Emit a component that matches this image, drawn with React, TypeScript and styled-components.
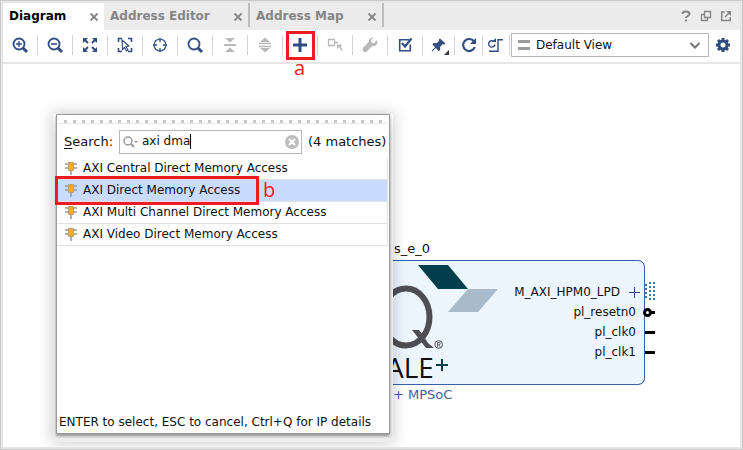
import React from "react";
import styled, { createGlobalStyle, css } from "styled-components";

const NAVY = "#2f4d82";
const GREY = "#b9b9b9";
const RED = "#ed1c24";

const GlobalStyle = createGlobalStyle`
  *, *::before, *::after { box-sizing: border-box; }
  body { margin: 0; background: #fff; font: 13px/16px "DejaVu Sans", sans-serif; color: #111; }
  button, input, select { font: inherit; color: inherit; margin: 0; padding: 0; border: 0; background: none; }
  svg { display: block; flex: none; }
`;

const Frame = styled.main`
  display: flex;
  flex-direction: column;
  min-height: 100vh;
  border: 1px solid #cbcbcb;
  box-shadow: inset 0 0 0 2px #e6e6e6;
  padding: 2px;
`;

const TabBar = styled.header`
  display: flex;
  height: 27px;
  background: #ececec;
`;

const Tab = styled.div<{ $active?: boolean; $width: number }>`
  display: flex;
  align-items: center;
  justify-content: space-between;
  width: ${(p) => p.$width}px;
  padding: 0 5px 2px 6px;
  color: ${(p) => (p.$active ? "#000" : "#858585")};
  background: ${(p) => (p.$active ? "#fff" : "transparent")};
  ${(p) =>
    !p.$active &&
    css`
      border-right: 2px solid transparent;
      border-image: linear-gradient(#bdbdbd 85%, transparent 85%) 1;
    `}
`;

const TabTitle = styled.button`
  font-weight: bold;
  font-size: 12px;
  white-space: nowrap;
`;

const IconButton = styled.button`
  display: flex;
  align-items: center;
  justify-content: center;
`;

const CloseButton = styled(IconButton)`
  padding-top: 3px;
`;

const WindowActions = styled.div`
  display: flex;
  gap: 8px;
  margin-left: auto;
  padding: 0 8px 2px 0;
`;

const ToolBar = styled.div`
  display: flex;
  align-items: center;
  height: 34px;
  padding-bottom: 2px;
  border-bottom: 2px solid #e6e6e6;
`;

const Tool = styled.div<{ $width?: number }>`
  display: flex;
  justify-content: center;
  flex: none;
  position: relative;
  width: ${(p) => p.$width ?? 35}px;
  height: 20px;
  border-right: 1px solid #d4d4d4;
`;

const Highlight = styled.span`
  position: absolute;
  top: -4px;
  left: 3px;
  width: 29px;
  height: 29px;
  border: 3px solid ${RED};
  pointer-events: none;
`;

const Marker = styled.span`
  position: absolute;
  font: 20px/24px "Open Sans", sans-serif;
  color: ${RED};
  z-index: 3;
`;

const ToolMarker = styled(Marker)`
  top: 21px;
  left: 11px;
`;

const ViewPicker = styled.label`
  display: flex;
  align-items: center;
  position: relative;
  flex: 1;
  height: 24px;
  margin-left: 1px;
  border: 1px solid #b8b8b8;
`;

const ViewSelect = styled.select`
  appearance: none;
  flex: 1;
  min-width: 0;
  height: 22px;
  padding-left: 24px;
  font-size: 12px;
  color: #111;
  outline: none;
`;

const ViewIcon = styled.span<{ $end?: boolean }>`
  position: absolute;
  ${(p) => (p.$end ? "right: 7px;" : "left: 6px;")}
  pointer-events: none;
`;

const SettingsButton = styled(IconButton)`
  flex: none;
  width: 31px;
  padding-right: 3px;
`;

const Canvas = styled.section`
  position: relative;
  flex: 1;
  min-height: 383px;
  overflow: hidden;
`;

const Node = styled.article`
  position: absolute;
  left: 390px;
  top: 176px;
  width: 252px;
`;

const NodeHeading = styled.div`
  height: 20px;
  line-height: 18px;
  padding-left: 1px;
`;

const NodeBody = styled.div`
  display: flex;
  justify-content: space-between;
  height: 125px;
  background: #edf5ff;
  border: 1px solid #3c60a8;
  border-left: 0;
  border-radius: 0 7px 7px 0;
`;

const LogoBox = styled.div`
  margin-left: -3px;
`;

const NodeKind = styled.div`
  padding-top: 1px;
  line-height: 18px;
  color: #3c5c9f;
`;

const Ports = styled.ul`
  list-style: none;
  margin: 0;
  padding: 21px 8px 0 0;
  font-size: 12px;
  line-height: 20px;
  text-align: right;
`;

const BusPort = styled.li`
  display: flex;
  align-items: center;
  justify-content: flex-end;
  gap: 8px;
  margin-right: -4px;
`;

const Pins = styled.div`
  position: absolute;
  left: 639px;
  top: 215px;
`;

const PopupBackdrop = styled.div`
  position: absolute;
  left: 50px;
  top: 50px;
  width: 340px;
  height: 328px;
  padding: 0 3px 8px;
  background: linear-gradient(#fff, #eee 20px);
  box-shadow: 0 0 14px 1px rgba(0, 0, 0, 0.2);
`;

const Popup = styled.form`
  display: flex;
  flex-direction: column;
  height: 320px;
  padding: 0 1px 2px 1px;
  background: #fff;
  border: 1px solid #9b9b9b;
  box-shadow: 0 2px 3px rgba(0, 0, 0, 0.4);
`;

const Grip = styled.div`
  height: 9px;
  flex: none;
  border-bottom: 1px solid #e9e9e9;
  background: repeating-linear-gradient(90deg, #c6c6c6 0 3px, transparent 3px 9px) 6px 5px / 318px 3px no-repeat;
`;

const SearchRow = styled.div`
  display: flex;
  align-items: center;
  height: 34px;
  padding: 1px 2px 0 6px;
`;

const SearchLabel = styled.label`
  flex: none;
  width: 55px;
  &::first-letter { text-decoration: underline; text-underline-offset: 2px; }
`;

const SearchBox = styled.div`
  display: flex;
  align-items: center;
  position: relative;
  flex: none;
  width: 183px;
  height: 24px;
  border: 1px solid #b8b8b8;
  padding: 0 2px 0 3px;
`;

const SearchInput = styled.input`
  flex: 1;
  min-width: 0;
  height: 22px;
  padding: 0 0 1px 3px;
  font-size: 12px;
  outline: none;
`;

const Caret = styled.span`
  position: absolute;
  left: 70px;
  top: 3px;
  width: 1px;
  height: 15px;
  background: #000;
`;

const MatchCount = styled.output`
  margin-left: 6px;
  white-space: nowrap;
`;

const Results = styled.ul`
  list-style: none;
  margin: 0;
  padding: 0;
  flex: none;
  border-right: 1px solid #e4e4e4;
`;

const Result = styled.li<{ $selected?: boolean }>`
  position: relative;
  height: 22px;
  border-bottom: 1px solid #e0e0e0;
  background: ${(p) => (p.$selected ? "#c9dcff" : "#fff")};
`;

const ResultButton = styled.button`
  display: flex;
  align-items: center;
  gap: 5px;
  width: 100%;
  height: 21px;
  padding: 0 0 1px 6px;
  font-size: 12px;
  white-space: nowrap;
`;

const ResultHighlight = styled.span`
  position: absolute;
  left: -3px;
  top: -4px;
  width: 204px;
  height: 29px;
  border: 3px solid ${RED};
  z-index: 2;
  pointer-events: none;
`;

const ResultMarker = styled(Marker)`
  left: 205px;
  top: -2px;
`;

const Hint = styled.footer`
  margin-top: auto;
  padding-left: 1px;
  line-height: 18px;
  font-size: 12px;
  white-space: nowrap;
`;

const Icon = ({ size = 20, color = NAVY, children }: { size?: number; color?: string; children: React.ReactNode }) => (
  <svg width={size} height={size} viewBox={`0 0 ${size} ${size}`} fill="none" stroke={color} strokeWidth="2" aria-hidden="true">
    {children}
  </svg>
);

const lens = (
  <>
    <circle cx="9" cy="9" r="5.5" strokeWidth="1.800" />
    <path d="M13 13l4 4" strokeWidth="3" />
  </>
);

const tools: { name: string; width?: number; color?: string; art: React.ReactNode; marked?: boolean }[] = [
  { name: "Zoom in", art: <>{lens}<path d="M6 9h6M9 6v6" strokeWidth="1.4" /></> },
  { name: "Zoom out", art: <>{lens}<path d="M6 9h6" strokeWidth="1.6" /></> },
  {
    name: "Zoom fit",
    art: (
      <>
        <path d="M4 4l4 4M16 4l-4 4M4 16l4-4M16 16l-4-4" />
        <path d="M3 3h5L3 8zM17 3v5l-5-5zM3 17v-5l5 5zM17 17h-5l5-5z" fill={NAVY} stroke="none" />
      </>
    ),
  },
  {
    name: "Select area",
    art: (
      <>
        <path d="M3.5 7V3.5H7M13 3.5h3.500V7M16.500 13v3.500H13M7 16.500H3.500V13" strokeWidth="1.600" />
        <path d="M7 5l7 6-3 .5 2 3.500-1.500 1-2-3.500L7.500 14.500z" strokeWidth="1.100" />
      </>
    ),
  },
  {
    name: "Auto fit selection",
    art: (
      <>
        <circle cx="10" cy="10" r="6" strokeWidth="1.200" />
        <path d="M10 3v4M10 13v4M3 10h4M13 10h4" strokeWidth="1.400" />
      </>
    ),
  },
  { name: "Search", art: lens },
  {
    name: "Collapse all",
    color: GREY,
    art: <><path d="M4 10h12" /><path d="M5 3h10l-5 4.500zM5 17h10l-5-4.500z" fill={GREY} stroke="none" /></>,
  },
  {
    name: "Expand all",
    color: GREY,
    art: <><path d="M4 8.500h12M4 11.500h12" strokeWidth="1.600" /><path d="M5 7h10l-5-4.500zM5 13h10l-5 4.500z" fill={GREY} stroke="none" /></>,
  },
  { name: "Add IP", marked: true, art: <path d="M3 10h14M10 3v14" strokeWidth="3" /> },
  {
    name: "Make external",
    color: GREY,
    art: (
      <>
        <path d="M3.500 4.500h6v6h-6zM10 7.500h3" strokeWidth="1.300" />
        <path d="M12 9.500h5.500l-1.800 1.800 2 4-1.200.7-2.200-4-2.300 2z" fill={GREY} stroke="none" />
      </>
    ),
  },
  {
    name: "Customize block",
    color: GREY,
    art: (
      <path
        d="M16.500 5.500l-2.500 2.500-2.500-.5-.5-2.500L13.500 2.800C11 2.200 8.300 4 8.600 7.300L3.300 12.600a2.500 2.500 0 1 0 3.800 3.700l5.300-5.200c3 .6 5.500-2.300 4.800-5.200z"
        fill={GREY}
        stroke="none"
      />
    ),
  },
  {
    name: "Validate design",
    art: <><path d="M14 4.700H4.700v11h10.600V9.500" strokeWidth="1.600" /><path d="M7 8l3 3.500 6.500-8" strokeWidth="2.200" /></>,
  },
  {
    name: "Pin",
    width: 32,
    art: (
      <>
        <path d="M11 3.500l5.500 5-1.500 1-1.500-.2-2.500 2.700.3 3-1.500 1-3-3-3.500 3.500-.7-.7 3.500-3.500-2.600-2.800 1-1.500 3.200.3 2.500-2.600-.3-1.200z" fill={NAVY} stroke="none" />
        <path d="M20 15v5h-5z" fill="#333" stroke="none" />
      </>
    ),
  },
  { name: "Regenerate layout", width: 28, art: <><path d="M15 6.500a6 6 0 1 0 .8 5.500" strokeWidth="2.200" /><path d="M17 3v6h-6z" fill={NAVY} stroke="none" /></> },
  { name: "Optimize routing", width: 27, art: <><path d="M8 6.500a3.200 3.200 0 1 0 1 3M3 16.300h9V4.700h5" strokeWidth="1.400" /><path d="M10 3v4H6z" fill={NAVY} stroke="none" /></> },
];

const Close = ({ name }: { name: string }) => (
  <CloseButton type="button" aria-label={`Close ${name}`}>
    <Icon size={10} color="#858585"><path d="M1.500 1.500l7 7M8.500 1.500l-7 7" strokeWidth="1.800" /></Icon>
  </CloseButton>
);

const ChipIcon = () => (
  <svg width="14" height="14" viewBox="0 0 14 14" aria-hidden="true">
    <path d="M1 3h12M1 7h12M7 9v5" stroke="#999" strokeWidth="1.500" />
    <path d="M4.500 1.500h5v8h-5z" fill="#fbab26" stroke="#b5a078" />
  </svg>
);

const tabs = [
  { name: "Diagram", width: 101, active: true },
  { name: "Address Editor", width: 146 },
  { name: "Address Map", width: 134 },
];

const results = [
  "AXI Central Direct Memory Access",
  "AXI Direct Memory Access",
  "AXI Multi Channel Direct Memory Access",
  "AXI Video Direct Memory Access",
];

const DeviceLogo = () => (
  <svg width="110" height="123" viewBox="-3 0 110 123" aria-hidden="true">
    <path d="M25 4h30l20 24H45z" fill="#003e4d" />
    <path d="M75 28h30l-20 23H55z" fill="#a9bbca" />
    <ellipse cx="13" cy="56" rx="23.500" ry="28.500" fill="none" stroke="#4e4f55" strokeWidth="6" />
    <path d="M19 69h7c4 4 6 9 9 13l6 5h-8c-5-6-9-12-14-18z" fill="#4e4f55" />
    <circle cx="45.700" cy="83.500" r="3.800" fill="none" stroke="#4e4f55" />
    <path d="M44.500 86v-4.500h1.500a1 1 0 0 1 0 2.200h-1.500M46 84l1.300 2" fill="none" stroke="#4e4f55" strokeWidth=".8" />
    <text x="-7" y="117" fontFamily="Open Sans, sans-serif" fontSize="28" fill="#111">ALE</text>
    <path d="M43 104h12M49 98v12" stroke="#003e4d" strokeWidth="2" />
  </svg>
);

export default function App() {
  return (
    <>
      <GlobalStyle />
      <Frame>
        <TabBar>
          {tabs.map((t) => (
            <Tab key={t.name} $width={t.width} $active={t.active}>
              <TabTitle type="button">{t.name}</TabTitle>
              <Close name={t.name} />
            </Tab>
          ))}
          <WindowActions>
            <IconButton type="button" aria-label="Help">
              <Icon size={12} color="#858585"><path d="M2.500 4c0-3.500 7-3.500 7 0 0 2-3.500 2-3.500 4M6 9.500v2" /></Icon>
            </IconButton>
            <IconButton type="button" aria-label="Float">
              <Icon size={12} color="#858585"><path d="M4.500 1.500h6v6h-6zM4.500 4.500h-3v6h6v-3" strokeWidth="1.300" /></Icon>
            </IconButton>
            <IconButton type="button" aria-label="Maximize">
              <Icon size={12} color="#858585"><path d="M5 2H1.700v8.500h8.600V7" strokeWidth="1.500" /><path d="M5 7l4-4" strokeWidth="1.500" /><path d="M6 1h5v5z" fill="#858585" stroke="none" /></Icon>
            </IconButton>
          </WindowActions>
        </TabBar>

        <ToolBar>
          {tools.map((t) => (
            <Tool key={t.name} $width={t.width}>
              <IconButton type="button" aria-label={t.name}>
                <Icon color={t.color}>{t.art}</Icon>
              </IconButton>
              {t.marked && (
                <>
                  <Highlight />
                  <ToolMarker>a</ToolMarker>
                </>
              )}
            </Tool>
          ))}
          <ViewPicker>
            <ViewIcon>
              <Icon size={12} color="#9b9b9b"><path d="M0 2.500h12M0 9.500h12" strokeWidth="3" /></Icon>
            </ViewIcon>
            <ViewSelect aria-label="View" defaultValue="Default View">
              <option>Default View</option>
            </ViewSelect>
            <ViewIcon $end>
              <Icon size={12} color="#777"><path d="M1.500 4L6 8.500 10.500 4" /></Icon>
            </ViewIcon>
          </ViewPicker>
          <SettingsButton type="button" aria-label="Settings">
            <Icon size={16}>
              <circle cx="8" cy="8" r="4" strokeWidth="3" />
              <path d="M8 1v2.500M8 12.500V15M1 8h2.500M12.500 8H15M3 3l1.800 1.800M11.200 11.200L13 13M13 3l-1.800 1.800M4.800 11.200L3 13" strokeWidth="3" />
            </Icon>
          </SettingsButton>
        </ToolBar>

        <Canvas>
          <Node>
            <NodeHeading>s_e_0</NodeHeading>
            <NodeBody>
              <LogoBox>
                <DeviceLogo />
              </LogoBox>
              <Ports>
                <BusPort>
                  M_AXI_HPM0_LPD
                  <Icon size={12}><path d="M1 6.500h11M6.500 1v11" strokeWidth="1" /></Icon>
                </BusPort>
                <li>pl_resetn0</li>
                <li>pl_clk0</li>
                <li>pl_clk1</li>
              </Ports>
            </NodeBody>
            <NodeKind>+ MPSoC</NodeKind>
          </Node>
          <Pins>
            <svg width="16" height="76" viewBox="0 0 16 76" aria-hidden="true">
              <path d="M4 5v16M8 3v18M12 3v18" stroke="#3c74a8" strokeWidth="2" strokeDasharray="2 2" />
              <path d="M8 33.500h5M3 53.500h10M3 73.500h10" stroke="#000" strokeWidth="3" />
              <circle cx="5.500" cy="33.500" r="3" fill="#fff" stroke="#000" strokeWidth="3" />
            </svg>
          </Pins>

          <PopupBackdrop>
            <Popup onSubmit={(e) => e.preventDefault()}>
              <Grip />
              <SearchRow>
                <SearchLabel htmlFor="ip-search">Search:</SearchLabel>
                <SearchBox>
                  <svg width="16" height="14" viewBox="0 0 16 14" fill="none" stroke="#999" aria-hidden="true">
                    <circle cx="5" cy="6" r="4" strokeWidth="1.500" />
                    <path d="M8 9l3 3" strokeWidth="2" />
                    <path d="M11 6h4l-2 2z" fill="#999" stroke="none" />
                  </svg>
                  <SearchInput id="ip-search" type="text" defaultValue="axi dma" />
                  <Caret />
                  <IconButton type="button" aria-label="Clear search">
                    <Icon size={14} color="#fff"><circle cx="7" cy="7" r="7" fill="#bcbcbc" stroke="none" /><path d="M4 4l6 6M10 4l-6 6" /></Icon>
                  </IconButton>
                </SearchBox>
                <MatchCount>(4 matches)</MatchCount>
              </SearchRow>
              <Results>
                {results.map((name, i) => (
                  <Result key={name} $selected={i === 1}>
                    <ResultButton type="button">
                      <ChipIcon />
                      {name}
                    </ResultButton>
                    {i === 1 && (
                      <>
                        <ResultHighlight />
                        <ResultMarker>b</ResultMarker>
                      </>
                    )}
                  </Result>
                ))}
              </Results>
              <Hint>ENTER to select, ESC to cancel, Ctrl+Q for IP details</Hint>
            </Popup>
          </PopupBackdrop>
        </Canvas>
      </Frame>
    </>
  );
}
